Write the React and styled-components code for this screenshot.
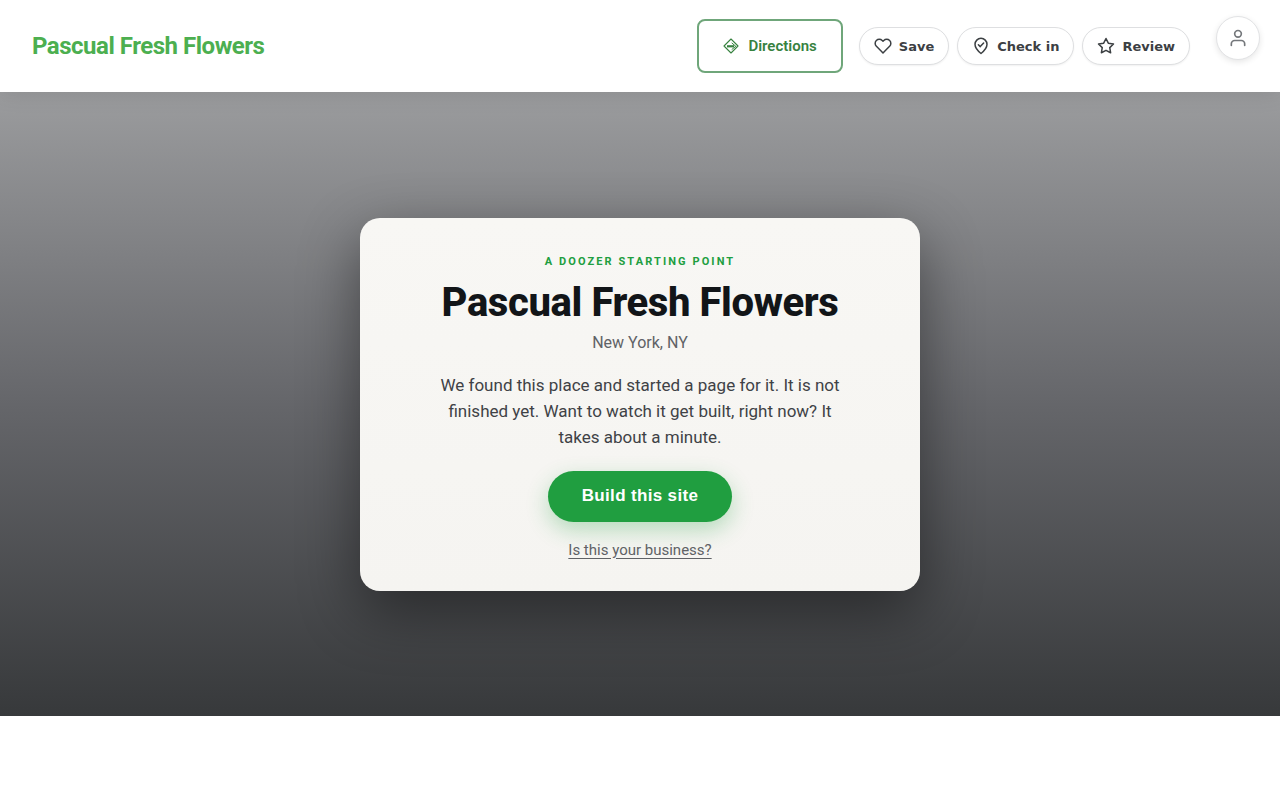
import React from "react";
import styled, { createGlobalStyle } from "styled-components";

const GlobalStyle = createGlobalStyle`
  *, *::before, *::after { box-sizing: border-box; }
  body {
    margin: 0;
    background: #fff;
    color: #3f4246;
    font-family: Roboto, "Liberation Sans", sans-serif;
  }
`;

const Header = styled.header`
  position: relative;
  z-index: 1;
  display: flex;
  align-items: center;
  justify-content: space-between;
  gap: 16px;
  min-height: 92px;
  padding: 0 20px 0 32px;
  background: #fff;
  box-shadow: 0 2px 20px rgba(0, 0, 0, 0.1);
`;

const Brand = styled.a`
  color: #4caf50;
  font-size: 24px;
  font-weight: 700;
  line-height: 32px;
  letter-spacing: -0.02em;
  text-decoration: none;
`;

const Actions = styled.nav`
  display: flex;
  align-items: center;
  gap: 16px;
`;

const DirectionsLink = styled.a`
  display: flex;
  align-items: center;
  gap: 9px;
  height: 54px;
  padding: 0 24px;
  border: 2px solid #6fa67a;
  border-radius: 8px;
  color: #37823f;
  font-size: 15px;
  font-weight: 600;
  line-height: 24px;
  text-decoration: none;
`;

const PillGroup = styled.div`
  display: flex;
  gap: 8px;
`;

const Pill = styled.button`
  display: flex;
  align-items: center;
  gap: 7px;
  height: 38px;
  padding: 0 14px;
  border: 1px solid #dedfe1;
  border-radius: 19px;
  background: #fff;
  box-shadow: 0 1px 2px rgba(0, 0, 0, 0.06);
  color: #3c4043;
  font-family: "DejaVu Sans", sans-serif;
  font-size: 13px;
  font-weight: 700;
  cursor: pointer;
`;

const AccountButton = styled.button`
  display: grid;
  place-items: center;
  align-self: flex-start;
  width: 44px;
  height: 44px;
  margin: 0 0 16px 10px;
  padding: 0;
  border: 1px solid #e2e3e5;
  border-radius: 50%;
  background: #fff;
  box-shadow: 0 2px 6px rgba(0, 0, 0, 0.1);
  color: #74777b;
  cursor: pointer;
`;

const Hero = styled.main`
  display: flex;
  align-items: center;
  justify-content: center;
  min-height: 78vh;
  padding: 48px 24px;
  background: linear-gradient(180deg, #9b9c9e 0%, #65666a 50%, #37393b 100%);
`;

const Card = styled.section`
  display: flex;
  flex-direction: column;
  align-items: center;
  width: 100%;
  max-width: 560px;
  padding: 37px 40px 31px;
  border-radius: 20px;
  background: linear-gradient(180deg, #f8f7f4, #f5f4f1);
  box-shadow: 0 20px 60px rgba(0, 0, 0, 0.45);
  text-align: center;
`;

const Eyebrow = styled.p`
  margin: 0 0 12px;
  color: #209e40;
  font-size: 11px;
  font-weight: 700;
  line-height: 14px;
  letter-spacing: 0.19em;
  text-transform: uppercase;
`;

const Title = styled.h1`
  margin: 0 0 6px;
  color: #121518;
  font-size: 40px;
  font-weight: 800;
  line-height: 44px;
  letter-spacing: -0.01em;
`;

const Place = styled.p`
  margin: 0 0 17px;
  color: #606266;
  font-size: 16px;
  line-height: 24px;
`;

const Message = styled.p`
  max-width: 420px;
  margin: 0 0 21px;
  font-size: 17px;
  line-height: 26px;
`;

const BuildButton = styled.button`
  height: 51px;
  margin: 0 0 18px;
  padding: 0 34px;
  border: 0;
  border-radius: 26px;
  background: #209e40;
  box-shadow: 0 8px 22px rgba(32, 158, 64, 0.3);
  color: #fff;
  font-family: "Liberation Sans", sans-serif;
  font-size: 17px;
  font-weight: 700;
  letter-spacing: 0.02em;
  cursor: pointer;
`;

const OwnerLink = styled.a`
  color: #606266;
  font-size: 15px;
  line-height: 20px;
  text-decoration: underline;
  text-underline-offset: 3px;
`;

const LineIcon = styled.svg.attrs({ viewBox: "0 0 24 24", "aria-hidden": true })`
  flex: none;
  width: ${({ $size }) => $size}px;
  height: ${({ $size }) => $size}px;
  fill: none;
  stroke: currentColor;
  stroke-width: 2;
  stroke-linecap: round;
  stroke-linejoin: round;
`;

function DirectionsIcon() {
  return (
    <svg width="16" height="16" viewBox="0 0 16 16" aria-hidden="true">
      <path d="M8 1 15 8 8 15 1 8Z" fill="none" stroke="currentColor" strokeWidth="1.1" strokeLinejoin="round" />
      <path d="M4 7.2h7v2.200H4Z" fill="currentColor" />
      <path d="M8.700 4.900 12.800 8.300 8.700 11.600" fill="none" stroke="currentColor" strokeWidth="1" />
    </svg>
  );
}

function HeartIcon() {
  return (
    <LineIcon $size={18}>
      <path d="M20.84 4.61a5.5 5.5 0 0 0-7.78 0L12 5.67l-1.060-1.060a5.500 5.500 0 0 0-7.780 7.780l1.060 1.060L12 21.230l7.780-7.780 1.060-1.060a5.500 5.500 0 0 0 0-7.780z" />
    </LineIcon>
  );
}

function CheckInIcon() {
  return (
    <LineIcon $size={18}>
      <path d="M12 22s8-6.200 8-12.200a8 8 0 0 0-16 0C4 15.800 12 22 12 22Z" />
      <path d="m8.500 10.300 2.500 2.500 4.500-4.800" />
    </LineIcon>
  );
}

function StarIcon() {
  return (
    <LineIcon $size={18}>
      <path d="m12 2 3.090 6.260L22 9.270l-5 4.870 1.180 6.880L12 17.770l-6.180 3.250L7 14.140 2 9.270l6.910-1.010Z" />
    </LineIcon>
  );
}

function UserIcon() {
  return (
    <LineIcon $size={20}>
      <path d="M20 21v-2a4 4 0 0 0-4-4H8a4 4 0 0 0-4 4v2" />
      <circle cx="12" cy="7" r="4" />
    </LineIcon>
  );
}

export default function App() {
  return (
    <>
      <GlobalStyle />
      <Header>
        <Brand href="#">Pascual Fresh Flowers</Brand>
        <Actions aria-label="Business actions">
          <DirectionsLink href="#directions">
            <DirectionsIcon />
            Directions
          </DirectionsLink>
          <PillGroup>
            <Pill type="button"><HeartIcon />Save</Pill>
            <Pill type="button"><CheckInIcon />Check in</Pill>
            <Pill type="button"><StarIcon />Review</Pill>
          </PillGroup>
          <AccountButton type="button" aria-label="Account">
            <UserIcon />
          </AccountButton>
        </Actions>
      </Header>
      <Hero>
        <Card>
          <Eyebrow>A Doozer starting point</Eyebrow>
          <Title>Pascual Fresh Flowers</Title>
          <Place>New York, NY</Place>
          <Message>
            We found this place and started a page for it. It is not finished yet. Want to watch it
            get built, right now? It takes about a minute.
          </Message>
          <BuildButton type="button">Build this site</BuildButton>
          <OwnerLink href="#claim">Is this your business?</OwnerLink>
        </Card>
      </Hero>
    </>
  );
}
